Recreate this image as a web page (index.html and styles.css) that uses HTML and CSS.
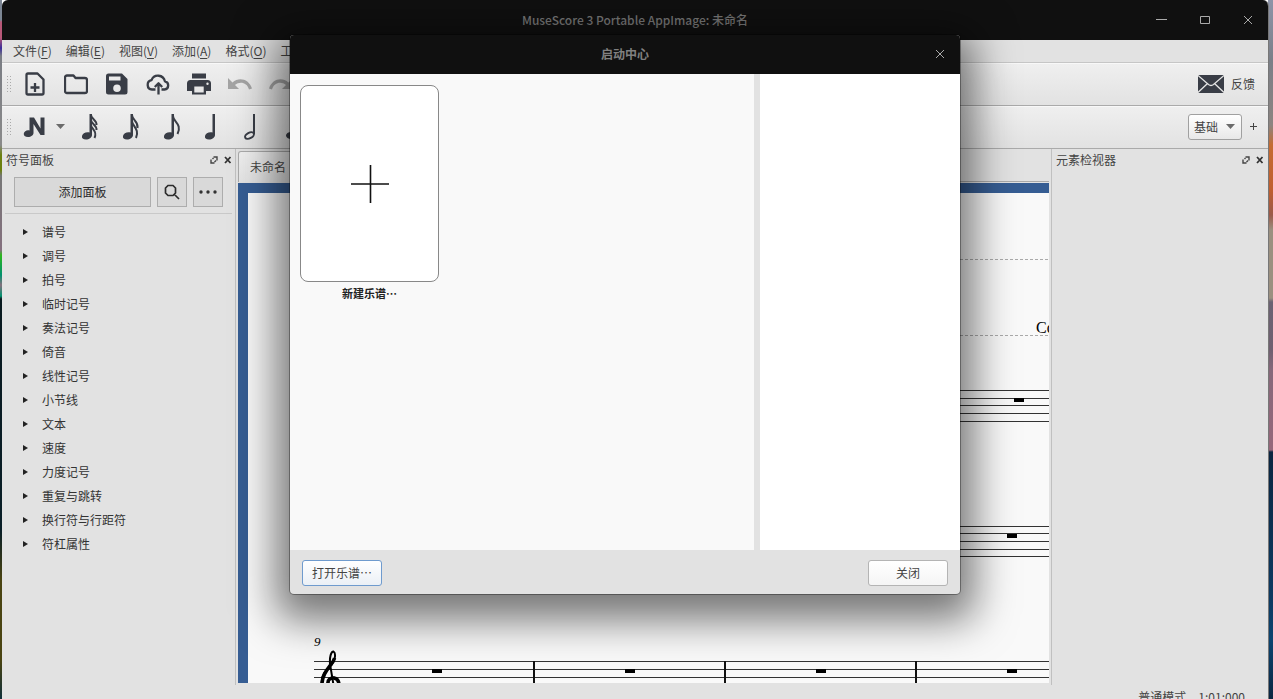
FILE: index.html
```html
<!DOCTYPE html>
<html lang="zh-CN">
<head>
<meta charset="utf-8">
<title>MuseScore 3 Portable AppImage: 未命名</title>
<link rel="stylesheet" href="styles.css">
</head>
<body>
<div class="desktop">
<div class="app">
  <header class="titlebar">
    <h1 class="titlebar-text">MuseScore 3 Portable AppImage: 未命名</h1>
    <div class="window-controls">
      <button class="window-btn" aria-label="最小化"><svg width="12" height="12" viewBox="0 0 12 12"><path d="M0 5.500h11"/></svg></button>
      <button class="window-btn" aria-label="最大化"><svg width="12" height="12" viewBox="0 0 12 12"><path d="M1.500 2.500h9v7h-9z"/></svg></button>
      <button class="window-btn" aria-label="关闭窗口"><svg width="12" height="12" viewBox="0 0 12 12"><path d="M2 2l8 8M10 2l-8 8"/></svg></button>
    </div>
  </header>

  <nav class="menubar">
    <button class="menu">文件(<u>F</u>)</button>
    <button class="menu">编辑(<u>E</u>)</button>
    <button class="menu">视图(<u>V</u>)</button>
    <button class="menu">添加(<u>A</u>)</button>
    <button class="menu">格式(<u>O</u>)</button>
    <button class="menu">工具(<u>T</u>)</button>
  </nav>

  <div class="toolbar">
    <span class="grip"></span>
    <button class="tool" aria-label="新建"><svg width="24" height="24" viewBox="0 0 24 24"><path class="line" d="M5 1.500h9.500l6 6V21a1.500 1.500 0 0 1-1.500 1.500H5A1.500 1.500 0 0 1 3.500 21V3A1.500 1.500 0 0 1 5 1.500zM12 11v9M7.500 15.500h9"/></svg></button>
    <button class="tool" aria-label="打开"><svg width="24" height="24" viewBox="0 0 24 24"><path class="line" d="M3 3.500h6.500l2 2.500H21a2 2 0 0 1 2 2v11a2 2 0 0 1-2 2H3a2 2 0 0 1-2-2v-13.500a2 2 0 0 1 2-2z"/></svg></button>
    <button class="tool" aria-label="保存"><svg width="24" height="24" viewBox="0 0 24 24"><path class="fill" fill-rule="evenodd" d="M3.500 1.500H17l5.500 5.500v13a2.500 2.500 0 0 1-2.500 2.500H3.500A2.500 2.500 0 0 1 1 20V4a2.500 2.500 0 0 1 2.500-2.500zM4 4.500v4h11.500v-4zM12 12.500a3.800 3.800 0 1 0 0 7.600 3.800 3.800 0 0 0 0-7.600z"/></svg></button>
    <button class="tool" aria-label="在线保存"><svg width="24" height="24" viewBox="0 0 24 24"><path class="line" d="M9.500 17.500H6A4.700 4.700 0 0 1 5.500 8.200a7 7 0 0 1 13.400 1.200A4.100 4.100 0 0 1 18.500 17.500H15.500M12.500 22.500V12M8.800 15l3.700-3.700 3.700 3.700"/></svg></button>
    <button class="tool" aria-label="打印"><svg width="24" height="24" viewBox="0 0 24 24"><path class="fill" fill-rule="evenodd" d="M5 1.500h14v5H5zM3.500 8h17A3.500 3.500 0 0 1 24 11.500V19h-5v3.500H5V19H0v-7.500A3.500 3.500 0 0 1 3.500 8zM7.300 14.500v6h9.400v-6zM20.500 10.500a1.200 1.200 0 1 0 0 2.400 1.200 1.200 0 0 0 0-2.400z"/></svg></button>
    <button class="tool" aria-label="撤销" disabled><svg width="24" height="24" viewBox="0 0 24 24"><path class="dim" d="M0 6v11h11l-4-4c4.500-4 12-3 14 4.500l3-1C21 7 11 4.500 4.500 10.500z"/></svg></button>
    <button class="tool" aria-label="重做" disabled><svg width="24" height="24" viewBox="0 0 24 24"><path class="dim" d="M24 6v11H13l4-4c-4.500-4-12-3-14 4.500l-3-1C3 7 13 4.500 19.500 10.500z"/></svg></button>
    <button class="feedback"><svg width="26" height="18" viewBox="0 0 26 18"><rect class="fill" width="26" height="18" rx="1"/><path class="flap" d="M0 .5l10.500 9q2.500 2 5 0L26 .5M0 17.500l9.500-9M26 17.500l-9.500-9"/></svg>反馈</button>
  </div>

  <div class="toolbar">
    <span class="grip"></span>
    <button class="tool" aria-label="音符输入"><svg width="24" height="24" viewBox="0 0 24 24"><path class="fill" d="M6.500 2.500h4.500l6.500 11V2.500h4V20h-4L10.500 9v9c0 2.200-2.500 4-5.500 4S.5 20.500.8 18.500c.4-2.400 3.200-3.800 5.700-3z"/></svg></button>
    <button class="tool-arrow" aria-label="输入模式"><svg width="9" height="5" viewBox="0 0 9 5"><path class="arrow" d="M0 0h9L4.500 5z"/></svg></button>
    <button class="tool note" aria-label="六十四分音符"><svg width="24" height="28" viewBox="0 0 24 28"><use href="#head"/><path class="flag" d="M13 2c0 4 6 5 5.500 10M13 7c0 4 6 5 5.500 10M13 12c0 4 7 6 3.500 13"/></svg></button>
    <button class="tool note" aria-label="十六分音符"><svg width="24" height="28" viewBox="0 0 24 28"><use href="#head"/><path class="flag" d="M13 2c0 5 6.500 6 5.500 13M13 8c0 5 8 8 4 17"/></svg></button>
    <button class="tool note" aria-label="八分音符"><svg width="24" height="28" viewBox="0 0 24 28"><use href="#head"/><path class="flag" d="M13 3c0 6 9.500 8 4.500 18"/></svg></button>
    <button class="tool note" aria-label="四分音符"><svg width="24" height="28" viewBox="0 0 24 28"><use href="#head"/></svg></button>
    <button class="tool note" aria-label="二分音符"><svg width="24" height="28" viewBox="0 0 24 28"><path class="flag" d="M12 1v20"/><ellipse class="half" cx="7.500" cy="22.500" rx="4.800" ry="2.800" transform="rotate(-28 7.500 22.500)"/></svg></button>
    <button class="tool note" aria-label="全音符"><svg width="24" height="28" viewBox="0 0 24 28"><ellipse class="fill" cx="8" cy="22.500" rx="5" ry="3.500"/></svg></button>
    <div class="workspace-picker">
      <label class="select-wrap"><select class="select" aria-label="工作区"><option>基础</option></select><svg class="select-arrow" width="9" height="5" viewBox="0 0 9 5"><path class="arrow" d="M0 0h9L4.500 5z"/></svg></label>
      <button class="add-workspace" aria-label="新建工作区"><svg width="7" height="7" viewBox="0 0 7 7"><path d="M3.500 0v7M0 3.500h7"/></svg></button>
    </div>
  </div>

  <main class="workspace">
    <aside class="dock dock-left">
      <div class="dock-title"><h2 class="dock-name">符号面板</h2>
        <button class="dock-btn" aria-label="浮动面板"><svg width="8" height="8" viewBox="0 0 8 8"><use href="#float"/></svg></button>
        <button class="dock-btn" aria-label="关闭面板"><svg width="8" height="8" viewBox="0 0 8 8"><use href="#close"/></svg></button>
      </div>
      <div class="palette-tools">
        <button class="flat-btn add-palette">添加面板</button>
        <button class="flat-btn square" aria-label="搜索"><svg width="16" height="16" viewBox="0 0 16 16"><path class="glass" d="M4 1.500h5l2.500 2.500v5L9 11.500H4L1.500 9V4zM10.500 10.500L15 15"/></svg></button>
        <button class="flat-btn square" aria-label="更多"><svg width="18" height="4" viewBox="0 0 18 4"><circle cx="2" cy="2" r="1.700"/><circle cx="9" cy="2" r="1.700"/><circle cx="16" cy="2" r="1.700"/></svg></button>
      </div>
      <ul class="palette">
        <li><button class="palette-row">谱号</button></li>
        <li><button class="palette-row">调号</button></li>
        <li><button class="palette-row">拍号</button></li>
        <li><button class="palette-row">临时记号</button></li>
        <li><button class="palette-row">奏法记号</button></li>
        <li><button class="palette-row">倚音</button></li>
        <li><button class="palette-row">线性记号</button></li>
        <li><button class="palette-row">小节线</button></li>
        <li><button class="palette-row">文本</button></li>
        <li><button class="palette-row">速度</button></li>
        <li><button class="palette-row">力度记号</button></li>
        <li><button class="palette-row">重复与跳转</button></li>
        <li><button class="palette-row">换行符与行距符</button></li>
        <li><button class="palette-row">符杠属性</button></li>
      </ul>
    </aside>

    <section class="editor">
      <div class="tabs"><button class="tab">未命名</button></div>
      <div class="canvas">
        <svg class="score" role="img" aria-label="乐谱">
          <path class="frame" d="M52 66.500H900M52 142.500H900"/>
          <text class="composer" x="788" y="140">Composer</text>
          <path class="staff" d="M66 197.500H900M66 205.500H900M66 212.500H900M66 220.500H900M66 228.500H900M66 333.500H900M66 340.500H900M66 348.500H900M66 356.500H900M66 363.500H900M66 468.500H900M66 476.500H900M66 484.500H900M66 491.500H900"/>
          <path class="bar" d="M286 468v31M477 468v31M668 468v31"/>
          <path d="M766 205h10v4h-10zM759 341h10v4h-10zM184 476h10v4h-10zM377 476h10v4h-10zM568 476h10v4h-10zM759 476h10v4h-10z"/>
          <text class="measure" x="66" y="453">9</text>
          <path class="clef" d="M89 513L82 471C81.500 464 83 458.500 85.500 458.500C88 460 87.500 467 83.500 472C77 478 73.500 482 73.500 489C73.500 497 81 501 88 500C93 498 92 484 85 484.500C80 485 79 491 83 495"/>
          <path class="clef-thick" d="M86.500 465C85 472 74 478 74 492"/>
          <path class="clef-thick" d="M80 492C79 486 83 484.500 86 485C89 485.500 91 488 91 492"/>
        </svg>
      </div>
    </section>

    <aside class="dock dock-right">
      <div class="dock-title"><h2 class="dock-name">元素检视器</h2>
        <button class="dock-btn" aria-label="浮动检视器"><svg width="8" height="8" viewBox="0 0 8 8"><use href="#float"/></svg></button>
        <button class="dock-btn" aria-label="关闭检视器"><svg width="8" height="8" viewBox="0 0 8 8"><use href="#close"/></svg></button>
      </div>
    </aside>
  </main>

  <footer class="status"><span>普通模式</span><span>1:01:000</span></footer>
</div>
</div>

<div class="dialog" role="dialog" aria-labelledby="dialog-title">
  <header class="dialog-title">
    <h2 class="dialog-name" id="dialog-title">启动中心</h2>
    <button class="window-btn dialog-close" aria-label="关闭启动中心"><svg width="12" height="12" viewBox="0 0 12 12"><path d="M2 2l8 8M10 2l-8 8"/></svg></button>
  </header>
  <div class="dialog-body">
    <div class="scores">
      <button class="new-score">
        <span class="sheet"><svg width="40" height="40" viewBox="0 0 40 40"><path d="M20.500 1v38M1 20h38"/></svg></span>
        <span class="sheet-name">新建乐谱⋯</span>
      </button>
    </div>
    <div class="side"></div>
  </div>
  <footer class="dialog-footer">
    <button class="push primary">打开乐谱⋯</button>
    <button class="push">关闭</button>
  </footer>
</div>

<svg class="symbols" width="0" height="0" aria-hidden="true">
  <defs>
    <g id="head"><path fill="#393d46" d="M11.500 1h2.500v21c0 2.500-3 4.500-6 4.500s-4.500-1.500-4-3.500c.5-2.500 4-4.500 7.500-3.500z"/></g>
    <path id="float" fill="none" stroke="#444" stroke-width="1.400" d="M3.500 1H7v3.500M1 3.500V7h3.500M2.500 3l1-1M4.500 6l1.500-1.500"/>
    <path id="close" fill="none" stroke="#333" stroke-width="1.800" d="M1 1l5.500 6M6.500 1L1 7"/>
  </defs>
</svg>
</body>
</html>
```

FILE: styles.css
```css
* { box-sizing: border-box; }

body {
  margin: 0;
  height: 100vh;
  overflow: hidden;
  font: 12px/18px "Noto Sans CJK SC", "Noto Sans", sans-serif;
  color: #444;
}

button, select {
  font: inherit;
  color: inherit;
  border: 0;
  padding: 0;
  background: none;
}

h1, h2, ul { margin: 0; padding: 0; font-size: 12px; }
ul { list-style: none; }
svg { display: block; flex: none; }
.symbols { position: absolute; }

/* Wallpaper strips beside the window */
.desktop {
  padding: 0 4px 0 2px;
  background:
    linear-gradient(#8e94a8 0, #7b7f88 60px, #8c8480 125px, #c56c33 145px, #c05f30 190px, #9a5a4a 215px, #9b9080 230px, #9b9080 298px, #6b6273 302px, #6f6070 350px, #86687a 370px, #96677a 450px, #0b2540 452px, #0d3a62 600px, #0c4470 640px, #0b2540 699px) right / 5px 100% no-repeat,
    linear-gradient(#7c8694 0, #7c8694 20px, #b85878 22px, #b85878 38px, #3a2c9a 48px, #7a7d84 56px, #8a8a8a 145px, #6b8010 155px, #6b8010 170px, #777 176px, #84707e 250px, #2eb81c 255px, #00916e 275px, #84707e 285px, #00916e 296px, #0a1a20 299px, #0a1f28 530px, #4a4412 580px, #4a4412 660px, #10303a 699px) left / 2px 100% no-repeat;
}

.app {
  height: calc(100vh + 10px);
  display: flex;
  flex-direction: column;
  background: #e2e2e2;
  border-right: 1px solid #777;
  border-radius: 6px 6px 0 0;
  overflow: hidden;
}

.titlebar {
  flex: none;
  height: 40px;
  display: grid;
  grid-template-columns: 1fr auto 1fr;
  align-items: center;
  background: #101010;
}
.titlebar-text { grid-column: 2; font-weight: 500; color: #777; }
.window-controls { display: flex; justify-content: flex-end; gap: 31px; padding-right: 14px; }
.window-btn svg { fill: none; stroke: #aaa; stroke-width: 1; }

.menubar {
  flex: none;
  height: 23px;
  display: flex;
  align-items: center;
  gap: 14px;
  padding-left: 11px;
  border-bottom: 1px solid #c6c6c6;
}
.menu { white-space: nowrap; }
.menu u { text-underline-offset: 2px; }

.toolbar {
  flex: none;
  height: 43px;
  display: flex;
  align-items: center;
  padding: 0 11px 2px 4px;
  background: linear-gradient(#efefef, #e2e2e2);
  border-top: 1px solid #f8f8f8;
  border-bottom: 1px solid #aaa;
}
.grip {
  width: 6px;
  height: 18px;
  margin-right: 2px;
  background: radial-gradient(circle, #aaa 0 1px, transparent 1px) 0 0 / 3px 3px;
}
.tool { width: 41px; height: 32px; display: grid; place-items: center; }
.tool-arrow { width: 10px; display: grid; place-items: center; }
.tool-arrow + .note { margin-left: 4px; }
.fill { fill: #393d46; }
.line { fill: none; stroke: #393d46; stroke-width: 2.300; stroke-linejoin: round; }
.dim { fill: #a4a4a4; }
.arrow { fill: #6b6b6b; }
.flag { fill: none; stroke: #393d46; stroke-width: 2; }
.half { fill: #e8e8e8; stroke: #393d46; stroke-width: 2; }
.feedback { margin-left: auto; display: flex; align-items: center; gap: 7px; padding-right: 2px; }
.flap { fill: none; stroke: #e4e4e4; stroke-width: 1.300; }

.workspace-picker { margin-left: auto; display: flex; align-items: center; gap: 8px; }
.select-wrap { display: grid; align-items: center; }
.select {
  grid-area: 1 / 1;
  appearance: none;
  width: 54px;
  height: 26px;
  padding-left: 5px;
  border: 1px solid #a0a0a0;
  border-radius: 3px;
  background: linear-gradient(#fff, #e8e8e8);
}
.select-arrow { grid-area: 1 / 1; justify-self: end; margin-right: 7px; pointer-events: none; }
.add-workspace svg { fill: none; stroke: #444; }

.workspace { flex: 1; min-height: 0; display: flex; gap: 2px; }
.dock { flex: none; }
.dock-left { width: 234px; border-right: 1px solid #c0c0c0; }
.dock-right { width: 217px; border-left: 1px solid #c0c0c0; }
.dock-title { display: flex; align-items: center; gap: 6px; height: 22px; padding: 0 4px; }
.dock-name { flex: 1; font-weight: 400; }
.dock-left .dock-title { padding-right: 3px; }

.palette-tools {
  display: flex;
  gap: 6px;
  margin: 0 3px;
  padding: 6px 9px;
  border-bottom: 1px solid #c9c9c9;
}
.flat-btn {
  height: 30px;
  display: grid;
  place-items: center;
  border: 1px solid #adadad;
  background: #d9d9d9;
  color: #2b2b2b;
}
.add-palette { flex: 1; }
.square { width: 30px; }
.square svg { fill: #333; }
.square .glass { fill: none; stroke: #2b2b2b; stroke-width: 1.700; }

.palette { padding: 6px 3px; }
.palette-row {
  width: 100%;
  height: 24px;
  display: flex;
  align-items: center;
  gap: 14px;
  padding-left: 18px;
  color: #333;
}
.palette-row::before {
  content: "";
  border: solid transparent;
  border-width: 3px 0 3px 5px;
  border-left-color: #222;
}

.editor { flex: 1; min-width: 0; display: flex; flex-direction: column; padding-bottom: 2px; }
.tabs { height: 33px; padding-top: 2px; border-bottom: 1px solid #aaa; }
.tab {
  height: 31px;
  padding: 0 11px;
  border: 1px solid #aaa;
  border-bottom: 0;
  border-radius: 3px 3px 0 0;
  background: linear-gradient(#efefef, #e4e4e4);
}
.canvas { flex: 1; min-height: 0; margin-top: 1px; padding: 10px 0 0 10px; background: #365d93; }
.score { width: 100%; height: 100%; overflow: hidden; background: #f9f9f9; }
.frame { stroke: #aaa; stroke-dasharray: 3 2; }
.staff { stroke: #333; }
.bar { stroke: #111; stroke-width: 2; }
.composer { font: 16px "Liberation Serif", serif; }
.measure { font: italic 13px "Liberation Serif", serif; }
.clef { fill: none; stroke: #000; stroke-width: 2; }
.clef-thick { fill: none; stroke: #000; stroke-width: 3.500; }

.status {
  flex: none;
  height: 24px;
  display: flex;
  justify-content: flex-end;
  align-items: center;
  gap: 12px;
  padding-right: 23px;
}

.dialog {
  position: absolute;
  top: 35px;
  left: 290px;
  width: 670px;
  height: 559px;
  display: flex;
  flex-direction: column;
  background: #e2e2e2;
  border-radius: 4px;
  box-shadow: 0 0 0 1px #0005, 0 12px 42px 14px #0008;
}
.dialog-title {
  flex: none;
  height: 39px;
  display: grid;
  grid-template-columns: 1fr auto 1fr;
  align-items: center;
  padding-bottom: 2px;
  background: #101010;
  border-radius: 4px 4px 0 0;
}
.dialog-name { grid-column: 2; font-weight: 700; color: #808080; }
.dialog-close { justify-self: end; margin-right: 14px; }
.dialog-body { flex: 1; display: flex; gap: 6px; }
.scores { flex: 1; padding: 11px 10px; background: #f9f9f9; }
.side { width: 200px; background: #fff; }
.new-score { display: grid; justify-items: center; gap: 2px; color: #222; }
.sheet {
  width: 139px;
  height: 197px;
  display: grid;
  place-items: center;
  border: 1px solid #888;
  border-radius: 8px;
  background: #fff;
}
.sheet svg { stroke: #111; stroke-width: 1.600; }
.sheet-name { font-size: 11px; font-weight: 700; }
.dialog-footer {
  flex: none;
  height: 44px;
  display: flex;
  justify-content: space-between;
  align-items: center;
  padding: 2px 12px 0;
}
.push {
  width: 80px;
  height: 26px;
  border: 1px solid #b4b4b4;
  border-radius: 3px;
  background: linear-gradient(#fff, #f5f5f5);
}
.primary { border-color: #6f9bce; background: linear-gradient(#fff, #ebf0f6); }
```
